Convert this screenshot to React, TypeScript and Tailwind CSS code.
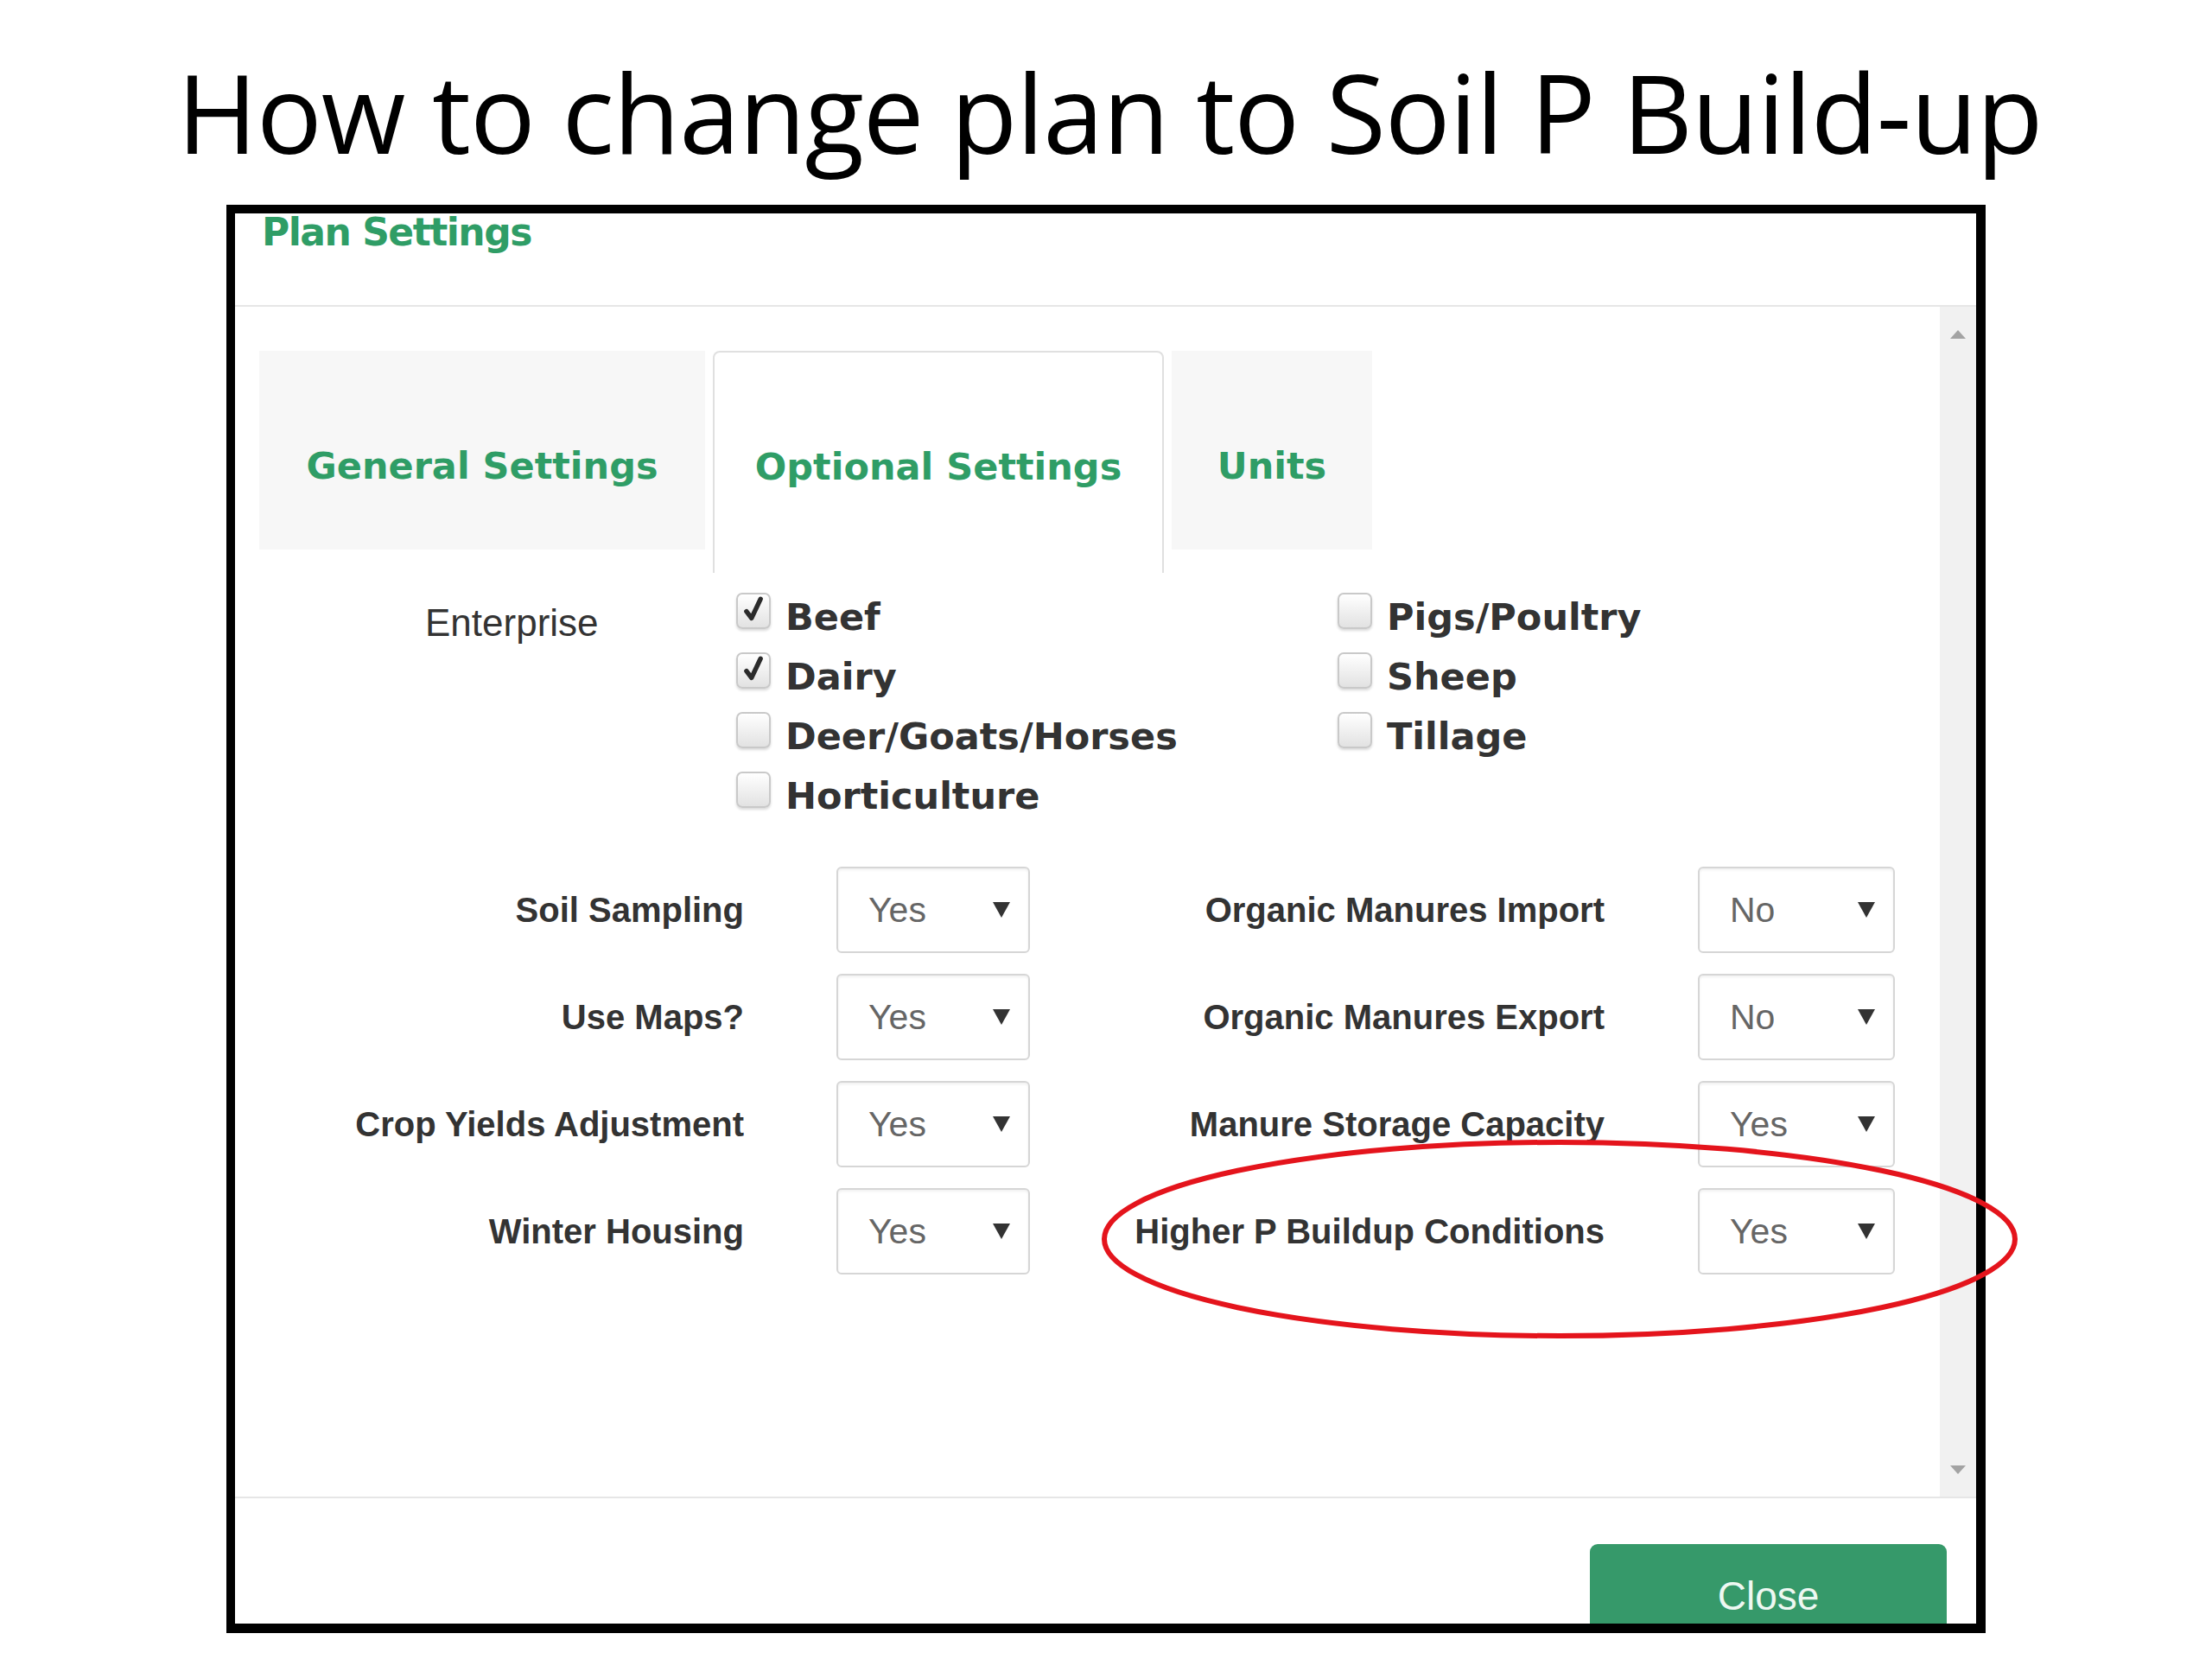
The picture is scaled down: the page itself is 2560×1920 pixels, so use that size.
import React from "react";

const enterpriseLeft = [
  { label: "Beef", checked: true },
  { label: "Dairy", checked: true },
  { label: "Deer/Goats/Horses", checked: false },
  { label: "Horticulture", checked: false },
];

const enterpriseRight = [
  { label: "Pigs/Poultry", checked: false },
  { label: "Sheep", checked: false },
  { label: "Tillage", checked: false },
];

const formRows = [
  { left: "Soil Sampling", leftValue: "Yes", right: "Organic Manures Import", rightValue: "No" },
  { left: "Use Maps?", leftValue: "Yes", right: "Organic Manures Export", rightValue: "No" },
  { left: "Crop Yields Adjustment", leftValue: "Yes", right: "Manure Storage Capacity", rightValue: "Yes" },
  { left: "Winter Housing", leftValue: "Yes", right: "Higher P Buildup Conditions", rightValue: "Yes" },
];

const CheckRow = ({ label, checked }: { label: string; checked: boolean }) => (
  <div className="flex h-[69px] items-start gap-[17px]">
    <div className="relative h-[42px] w-[40px] rounded-[7px] border-2 border-[#c9c9c9] bg-gradient-to-b from-white to-[#e2e2e2] shadow-[0_2px_3px_rgba(0,0,0,0.15)]">
      {checked && (
        <svg viewBox="0 0 20 24" className="absolute left-[6px] top-[1px] h-[32px] w-[26px]">
          <path d="M3 14 L7.5 20 L15.5 3" fill="none" stroke="#2b2b2b" strokeWidth="4.2" strokeLinecap="round" strokeLinejoin="round" />
        </svg>
      )}
    </div>
    <span className="mt-[7px] font-['DejaVu_Sans',sans-serif] text-[43px] font-bold leading-none text-[#333]">
      {label}
    </span>
  </div>
);

const Select = ({ value, width }: { value: string; width: string }) => (
  <div
    className={`flex h-[100px] ${width} items-center justify-between rounded-[6px] border-2 border-[#d6d6d6] bg-white pl-[35px] pr-[20px] shadow-[inset_0_2px_3px_rgba(0,0,0,0.06)]`}
  >
    <span className="font-['Liberation_Sans',Arial,sans-serif] text-[41px] font-normal leading-none text-[#666]">{value}</span>
    <svg viewBox="0 0 22 20" className="h-[20px] w-[22px]">
      <path d="M1 1 H21 L11 19 Z" fill="#333" />
    </svg>
  </div>
);

const App = () => {
  return (
    <div className="relative h-[1920px] w-[2560px] overflow-hidden bg-white">
      {/* slide title */}
      <div className="pl-[205px] pt-[66px]">
        <h1 className="font-['Open_Sans',sans-serif] text-[126px] font-normal leading-[126px] tracking-[-1px] text-black">
          How to change plan to Soil P Build-up
        </h1>
      </div>

      {/* dialog screenshot frame */}
      <div className="ml-[262px] mt-[45px] flex h-[1653px] w-[2036px] flex-col overflow-hidden border-b-[11px] border-l-[10px] border-r-[11px] border-t-[10px] border-black bg-white">
        {/* header */}
        <div className="h-[108px] shrink-0 border-b-2 border-[#e6e6e6] pl-[31px]">
          <div className="font-['DejaVu_Sans',sans-serif] text-[44px] font-bold leading-none tracking-[-1.5px] text-[#2f9d66]">
            Plan Settings
          </div>
        </div>

        {/* body */}
        <div className="flex h-[1379px] shrink-0 border-b-2 border-[#e6e6e6]">
          <div className="flex-1">
            {/* tabs */}
            <div className="ml-[28px] mt-[51px] flex items-start gap-[9px] font-['DejaVu_Sans',sans-serif] text-[43px] font-bold leading-none text-[#2f9d66]">
              <div className="flex h-[230px] w-[516px] justify-center bg-[#f7f7f7] pt-[112px]">General Settings</div>
              <div className="flex h-[257px] w-[522px] justify-center rounded-t-[8px] border-x-2 border-t-2 border-[#e0e0e0] bg-white pt-[111px]">
                Optional Settings
              </div>
              <div className="flex h-[230px] w-[232px] justify-center bg-[#f7f7f7] pt-[112px]">Units</div>
            </div>

            {/* enterprise */}
            <div className="mt-[23px] flex pl-[220px]">
              <div className="w-[360px] pt-[13px] font-['Liberation_Sans',Arial,sans-serif] text-[44px] leading-none text-[#333]">
                Enterprise
              </div>
              <div className="flex w-[696px] flex-col">
                {enterpriseLeft.map((e) => (
                  <CheckRow key={e.label} label={e.label} checked={e.checked} />
                ))}
              </div>
              <div className="flex flex-col">
                {enterpriseRight.map((e) => (
                  <CheckRow key={e.label} label={e.label} checked={e.checked} />
                ))}
              </div>
            </div>

            {/* yes / no settings */}
            <div className="mt-[41px] flex flex-col gap-[24px] font-['Liberation_Sans',Arial,sans-serif] text-[40px] font-bold leading-none text-[#333]">
              {formRows.map((r) => (
                <div key={r.left} className="flex h-[100px] items-center">
                  <div className="w-[589px] text-right">{r.left}</div>
                  <div className="ml-[107px]">
                    <Select value={r.leftValue} width="w-[224px]" />
                  </div>
                  <div className="w-[665px] text-right">{r.right}</div>
                  <div className="ml-[108px]">
                    <Select value={r.rightValue} width="w-[228px]" />
                  </div>
                </div>
              ))}
            </div>
          </div>

          {/* scrollbar */}
          <div className="flex w-[42px] shrink-0 flex-col items-center justify-between bg-[#f1f1f1] pb-[26px] pt-[27px]">
            <svg viewBox="0 0 18 10" className="h-[10px] w-[18px]">
              <path d="M0 10 L9 0 L18 10 Z" fill="#a3a3a3" />
            </svg>
            <svg viewBox="0 0 18 10" className="h-[10px] w-[18px]">
              <path d="M0 0 L18 0 L9 10 Z" fill="#a3a3a3" />
            </svg>
          </div>
        </div>

        {/* footer */}
        <div className="flex flex-1 justify-end pr-[34px] pt-[53px]">
          <button className="h-[110px] w-[413px] self-start rounded-t-[9px] bg-[#36996a] pt-[10px] text-center font-['Liberation_Sans',Arial,sans-serif] text-[46px] leading-none text-[#eef8f2]">
            Close
          </button>
        </div>
      </div>

      {/* red annotation ellipse */}
      <svg className="pointer-events-none absolute left-0 top-0 h-[1920px] w-[2560px]" viewBox="0 0 2560 1920">
        <ellipse cx="1805" cy="1434" rx="527" ry="112" fill="none" stroke="#e4141c" strokeWidth="6" />
      </svg>
    </div>
  );
};

export default App;
